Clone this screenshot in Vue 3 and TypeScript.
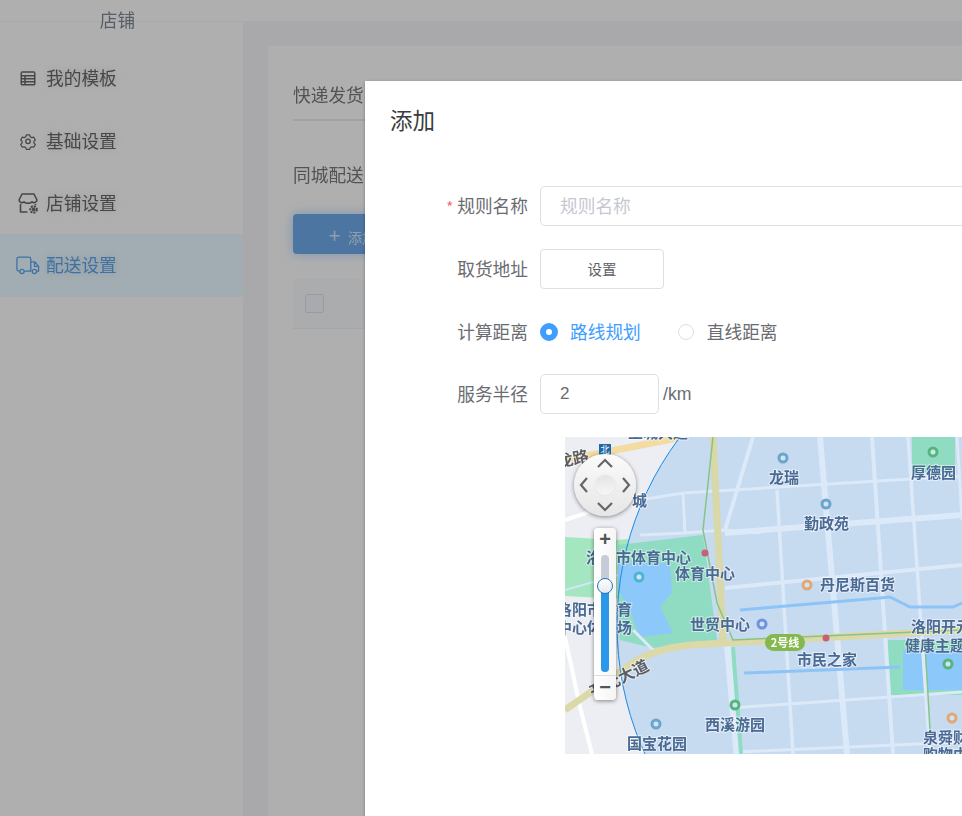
<script setup lang="ts">
interface Label { t: string; x: number; y: number; fill?: string }
interface Road { d: string; w: number; c: string }
interface Pin { x: number; y: number; c: string }

const menu = [
  { name: '我的模板', icon: 'table', active: false },
  { name: '基础设置', icon: 'gear', active: false },
  { name: '店铺设置', icon: 'shop', active: false },
  { name: '配送设置', icon: 'truck', active: true },
]

const R = '#dbe9f9'
const roads: Road[] = [
  { d: 'M820 437 L847 754', w: 6, c: R },
  { d: 'M872 437 L893 754', w: 4, c: R },
  { d: 'M908 437 L930 754', w: 3.5, c: R },
  { d: 'M777 490 L793 754', w: 3.5, c: R },
  { d: 'M957 437 L962 520', w: 3, c: R },
  { d: 'M683 493 L960 476', w: 3, c: R },
  { d: 'M725 533 L962 515', w: 6, c: R },
  { d: 'M725 588 L962 565', w: 4, c: R },
  { d: 'M730 708 L962 692', w: 3, c: R },
  { d: 'M738 752 L962 742', w: 3, c: R },
  { d: 'M683 493 L685 533', w: 3, c: R },
  { d: 'M640 535 L685 533 L723 530 L760 533', w: 3, c: R },
  { d: 'M753 437 L725 530', w: 4, c: R },
  { d: 'M727 640 L737 754', w: 7, c: R },
  { d: 'M640 500 L683 493', w: 3, c: R },
  { d: 'M565 520 L640 495', w: 4, c: '#ffffff' },
  { d: 'M565 637 L580 707 L592 754', w: 4, c: '#ffffff' },
  { d: 'M565 590 L618 575', w: 2, c: '#cfe6fb' },
  { d: 'M633 630 L653 650', w: 3, c: R },
  { d: 'M740 610 L880 598 L890 597 L910 607 L953 607 L962 603', w: 3, c: '#8cc4f8' },
  { d: 'M744 673 L900 667', w: 3, c: '#8cc4f8' },
  { d: 'M565 460 L677 438', w: 7, c: '#f3dca2' },
  { d: 'M713 437 L723 640', w: 7, c: '#d9d8a8' },
  { d: 'M565 710 L637 660 Q660 648 690 645 L962 630', w: 7, c: '#dcd9a8' },
  { d: 'M713 437 L703 530 L717 603 L733 640 L962 630', w: 1.5, c: '#86c48a' },
  { d: 'M925 643 L930 730', w: 1.5, c: '#86c48a' },
]

const labels: Label[] = [
  { t: '龙瑞', x: 769, y: 476 },
  { t: '勤政苑', x: 804, y: 522 },
  { t: '厚德园', x: 911, y: 471 },
  { t: '丹尼斯百货', x: 820, y: 583 },
  { t: '洛阳市体育中心', x: 586, y: 556 },
  { t: '体育中心', x: 675, y: 572 },
  { t: '洛阳市体育', x: 557, y: 608 },
  { t: '中心体育场', x: 557, y: 626 },
  { t: '世贸中心', x: 690, y: 623 },
  { t: '市民之家', x: 797, y: 658 },
  { t: '洛阳开元', x: 911, y: 625 },
  { t: '健康主题', x: 905, y: 644 },
  { t: '西溪游园', x: 705, y: 723 },
  { t: '国宝花园', x: 627, y: 742 },
  { t: '泉舜财富', x: 923, y: 736 },
  { t: '购物中心', x: 923, y: 753 },
  { t: '城', x: 632, y: 499 },
  { t: '王城大道', x: 628, y: 431 },
]

const pins: Pin[] = [
  { x: 783, y: 458, c: '#6aa6cc' },
  { x: 826, y: 504, c: '#6aa6cc' },
  { x: 933, y: 452, c: '#55b67c' },
  { x: 807, y: 585, c: '#e2a874' },
  { x: 639, y: 577, c: '#4cb4d4' },
  { x: 762, y: 624, c: '#7090e0' },
  { x: 735, y: 705, c: '#55b67c' },
  { x: 656, y: 724, c: '#6aa6cc' },
  { x: 952, y: 718, c: '#e2a874' },
  { x: 948, y: 664, c: '#55b67c' },
]
</script>

<template>
  <div class="page">
    <div class="shell">
      <aside class="aside">
        <div class="shop">店铺</div>
        <div v-for="m in menu" :key="m.name" class="item" :class="{ active: m.active }">
          <span class="ico">
            <svg v-if="m.icon === 'table'" viewBox="0 0 24 24" width="18" height="18" fill="none" stroke="currentColor" stroke-width="2">
              <rect x="3" y="4" width="18" height="17" rx="1.5" />
              <path d="M3 9h18M3 13h18M3 17h18M8 9v12" />
            </svg>
            <svg v-else-if="m.icon === 'gear'" viewBox="0 0 24 24" width="18" height="18" fill="none" stroke="currentColor" stroke-width="1.8" stroke-linejoin="round">
              <path d="M9.5 3h5l.8 2.7 2.3 1.3 2.8-.7 2.4 4.2-2 2 0 2.6 0 0 2 1.9-2.4 4.2-2.8-.7-2.3 1.3-.8 2.7h-5l-.8-2.7-2.3-1.3-2.8.7-2.4-4.2 2-1.9v-2.6l-2-2 2.4-4.2 2.8.7 2.3-1.3z" transform="translate(1.2 1.2) scale(.9)" />
              <circle cx="12" cy="12.4" r="3" />
            </svg>
            <svg v-else-if="m.icon === 'shop'" viewBox="0 0 24 24" width="24" height="24" fill="none" stroke="currentColor" stroke-width="1.6" stroke-linejoin="round">
              <path d="M6 3h12l3 6a3 3 0 0 1-5 1.800A3.600 3.600 0 0 1 12 12a3.600 3.600 0 0 1-4-1.200A3 3 0 0 1 3 9z" />
              <path d="M4.500 13v8h7M19.500 13v1" />
              <circle cx="17.500" cy="18.500" r="3.200" stroke-width="2.200" stroke-dasharray="2 1" />
              <circle cx="17.500" cy="18.500" r="1" />
            </svg>
            <svg v-else viewBox="0 0 26 20" width="24" height="19" fill="none" stroke="currentColor" stroke-width="1.400" stroke-linejoin="round">
              <path d="M4 16H3a2 2 0 0 1-2-2V3a2 2 0 0 1 2-2h11a2 2 0 0 1 2 2v13H9" />
              <path d="M16 6h4.500l4 5v5h-2M17 16h1M20 7v4h4.500" />
              <circle cx="6.500" cy="16.500" r="2.300" />
              <circle cx="20" cy="16.500" r="2.300" />
            </svg>
          </span>
          <span class="itext">{{ m.name }}</span>
        </div>
      </aside>
      <main class="main">
        <div class="topbar"></div>
        <section class="card">
          <div class="tabs"><span>快递发货</span></div>
          <div class="sub">同城配送</div>
          <button class="add" type="button"><span class="plus">+</span>添加</button>
          <div class="thead"><span class="check"></span></div>
        </section>
      </main>
    </div>

    <div class="overlay"></div>

    <div class="modal">
      <h2 class="title">添加</h2>
      <form class="form" @submit.prevent>
        <div class="row">
          <label class="label"><i class="req">*</i>规则名称</label>
          <input class="input wide" placeholder="规则名称" />
        </div>
        <div class="row">
          <label class="label">取货地址</label>
          <button class="set" type="button">设置</button>
        </div>
        <div class="row tight">
          <label class="label">计算距离</label>
          <span class="radio on"><i></i><em>路线规划</em></span>
          <span class="radio"><i></i><em>直线距离</em></span>
        </div>
        <div class="row">
          <label class="label">服务半径</label>
          <input class="input num" value="2" />
          <span class="unit">/km</span>
        </div>
        <div class="map">
          <svg class="mapsvg" viewBox="565 437 728 317" width="728" height="317">
            <rect x="565" y="437" width="728" height="317" fill="#eceef3" />
            <path d="M565 537 L617 540 L640 538 L640 600 L565 596 Z" fill="#a4e6c0" />
            <circle cx="929" cy="625" r="312" fill="#c6daf0" />
            <path d="M618 545 L703 535 L717 640 L653 648 L620 640 Z" fill="#8fdcc2" />
            <rect x="912" y="437" width="43" height="35" fill="#8fdcc2" />
            <rect x="888" y="640" width="74" height="55" fill="#8fdcc2" />
            <rect x="903" y="650" width="59" height="40" fill="#8cc8fa" />
            <path d="M618 563 L670 563 L672 593 L660 607 L673 633 L640 637 L630 610 L618 590 Z" fill="#8cc8fa" />
            <path v-for="(r, i) in roads" :key="i" :d="r.d" :stroke="r.c" :stroke-width="r.w" fill="none" />
            <path d="M733 647 L741 754" stroke="#8fdcc2" stroke-width="4" fill="none" />
            <circle cx="929" cy="625" r="312" fill="none" stroke="#1a8ae8" stroke-width="1" />
            <g v-for="(p, i) in pins" :key="i">
              <circle :cx="p.x" :cy="p.y" r="4" fill="#d2e4f2" :stroke="p.c" stroke-width="3" />
            </g>
            <circle cx="705" cy="553" r="3.500" fill="#c8607a" />
            <circle cx="826" cy="638" r="3.500" fill="#c8607a" />
            <text v-for="l in labels" :key="l.t" class="mlabel" :x="l.x" :y="l.y">{{ l.t }}</text>
            <text class="mlabel road" x="557" y="461" transform="rotate(-12 557 461)">龙路</text>
            <text class="mlabel road" x="590" y="692" transform="rotate(-27 590 692)">开元大道</text>
            <rect x="765" y="634" width="40" height="17" rx="8.500" fill="#84b84c" />
            <text class="line2" x="785" y="642">2号线</text>
          </svg>
          <div class="north">北</div>
          <div class="compass">
            <svg viewBox="0 0 62 62" width="62" height="62" fill="none" stroke="#666" stroke-width="2.200">
              <path d="M24 13l7-7 7 7M24 49l7 7 7-7M13 24l-6 7 6 7M49 24l6 7-6 7" />
            </svg>
            <span class="knob"></span>
          </div>
          <div class="zoomer">
            <span class="zbtn">+</span>
            <div class="track"><i class="lower"></i><b class="thumb"></b></div>
            <span class="zbtn minus">−</span>
          </div>
        </div>
      </form>
    </div>
  </div>
</template>

<style>
html, body { margin: 0; overflow: hidden; }
</style>

<style scoped>
.page {
  position: relative;
  width: 962px;
  height: 816px;
  overflow: hidden;
  font-family: "Noto Sans CJK SC", "Liberation Sans", sans-serif;
  color: #606266;
}
.shell { display: flex; height: 100%; filter: blur(.6px); }
.aside { width: 243px; flex: none; background: #fbfbfb; color: #555; }
.shop {
  height: 47px;
  box-sizing: border-box;
  padding: 6px 8px 0 0;
  text-align: center;
  font-size: 17.700px;
  line-height: 26px;
  color: #7b8794;
  background: linear-gradient(#fbfbfb 21px, #f2f2f2 21px, #f2f2f2 22px, #fbfbfb 22px);
}
.item {
  height: 62.400px;
  display: flex;
  align-items: center;
  padding-left: 16px;
  font-size: 17.700px;
  color: #666;
  text-shadow: 0 0 8px rgba(0,0,0,.15);
}
.itext { padding-bottom: 2px; }
.item.active { background: #e7f8ff; color: #5aa4ec; }
.ico { width: 24px; margin-right: 6px; display: flex; justify-content: center; align-items: center; }
.main { flex: 1; background: #f2f3f5; display: flex; flex-direction: column; min-width: 0; }
.topbar { height: 21px; flex: none; background: #fbfbfb; }
.card { margin: 25px 0 0 25px; padding: 0 25px; background: #fbfbfb; flex: 1; }
.tabs { height: 50px; margin-top: 25px; padding-top: 10px; box-sizing: border-box; border-bottom: 2px solid #e4e7ed; font-size: 17.700px; line-height: 26px; color: #777; }
.sub { margin-top: 40px; font-size: 17.700px; line-height: 26px; color: #777; }
.add { display: block; margin-top: 27px; width: 200px; height: 40px; border: 0; border-radius: 4px; background: #6ea8e8; color: #cfe3f8; font: inherit; font-size: 14px; text-align: left; padding-left: 36px; box-shadow: 0 0 12px rgba(64,158,255,.4); }
.plus { font-size: 20px; margin-right: 8px; }
.thead { margin-top: 25px; height: 50px; background: #f5f7fa; display: flex; align-items: center; padding-left: 12px; border-bottom: 1px solid #ebeef5; box-sizing: border-box; }
.check { width: 17px; height: 17px; border: 1px solid #dcdfe6; border-radius: 2px; background: #f2f4fb; }
.overlay { position: absolute; inset: 0; background: rgba(0,0,0,.3); }
.modal {
  position: absolute;
  left: 365px;
  top: 81px;
  width: 900px;
  height: 900px;
  background: #fff;
  box-shadow: 0 1px 3px rgba(0,0,0,.3);
}
.title { margin: 0; padding: 21px 25px 0; font-size: 22.500px; font-weight: 400; line-height: 34px; color: #3a3c40; }
.form { padding-top: 50px; }
.row { display: flex; align-items: center; height: 40px; margin-bottom: 23px; font-size: 17.700px; }
.row.tight { margin-bottom: 22px; }
.label { width: 163px; margin-right: 12px; padding-bottom: 2px; text-align: right; flex: none; color: #6a6c72; }
.req { color: #f56c6c; font-style: normal; font-size: 15px; margin-right: 4px; }
.input {
  box-sizing: border-box;
  height: 40px;
  border: 1px solid #dcdfe6;
  border-radius: 5px;
  padding: 0 19px 2px;
  font: inherit;
  font-size: 17.700px;
  color: #6a6c72;
  outline: none;
}
.input::placeholder { color: #c6c8d0; }
.wide { width: 600px; }
.num { width: 119px; font-family: "Liberation Sans", sans-serif; font-size: 17px; padding-bottom: 0; }
.unit { margin-left: 4px; font-family: "Liberation Sans", sans-serif; font-size: 17.700px; color: #6a6c72; }
.set { width: 124px; height: 40px; box-sizing: border-box; border: 1px solid #dcdfe6; border-radius: 4px; background: #fff; font: inherit; font-size: 14.500px; color: #606266; padding-bottom: 3px; }
.radio { display: flex; align-items: center; margin-right: 37px; padding-bottom: 1px; color: #6a6c72; }
.radio em { font-style: normal; padding-bottom: 1px; }
.radio i { width: 16px; height: 16px; border: 1px solid #dcdfe6; border-radius: 50%; box-sizing: border-box; margin-right: 13px; background: #fff; }
.radio.on { color: #409eff; }
.radio.on i { width: 18px; height: 18px; margin-right: 12px; border: 6px solid #409eff; }
.map { position: relative; margin: 0 0 0 200px; width: 728px; height: 317px; overflow: hidden; }
.mapsvg { display: block; filter: blur(.45px); }
.mlabel { font-size: 15px; font-weight: 700; fill: #4a6a94; stroke: rgba(255,255,255,.5); stroke-width: 2px; paint-order: stroke; dominant-baseline: central; }
.mlabel.road { fill: #5a5d64; font-size: 16px; }
.line2 { font-size: 11px; font-weight: 700; fill: #fff; text-anchor: middle; dominant-baseline: central; }
.north { position: absolute; left: 34px; top: 7px; width: 12px; height: 12px; background: #1e6aa6; color: #fff; font-size: 9px; line-height: 12px; text-align: center; }
.compass {
  position: absolute;
  left: 9px;
  top: 17px;
  width: 62px;
  height: 62px;
  border-radius: 50%;
  background: linear-gradient(#fbfbfb, #e6e6e6);
  box-shadow: 0 1px 4px rgba(0,0,0,.45);
}
.knob { position: absolute; left: 21px; top: 21px; width: 20px; height: 20px; border-radius: 50%; background: linear-gradient(#e4e4e4, #f6f6f6); box-shadow: 0 0 2px rgba(0,0,0,.1); }
.zoomer {
  position: absolute;
  left: 29px;
  top: 91px;
  width: 22px;
  height: 172px;
  border-radius: 4px;
  background: linear-gradient(90deg, #fff, #f5f5f5);
  box-shadow: 0 1px 4px rgba(0,0,0,.45);
  display: flex;
  flex-direction: column;
  align-items: center;
}
.zbtn { height: 24px; line-height: 22px; font-size: 20px; font-weight: 700; font-family: "Liberation Sans", sans-serif; color: #555; flex: none; }
.zbtn.minus { margin-top: auto; border-top: 1px solid #ddd; width: 100%; text-align: center; }
.track { position: relative; width: 8px; height: 117px; margin-top: 3px; border-radius: 4px; background: #c5ccd8; }
.lower { position: absolute; left: 0; right: 0; bottom: 0; top: 35px; border-radius: 0 0 4px 4px; background: #2a97e8; }
.thumb { position: absolute; left: -4px; top: 23px; width: 16px; height: 16px; box-sizing: border-box; border: 1.500px solid #1e78c0; border-radius: 50%; background: linear-gradient(#fff, #e8e8e8); }
</style>
